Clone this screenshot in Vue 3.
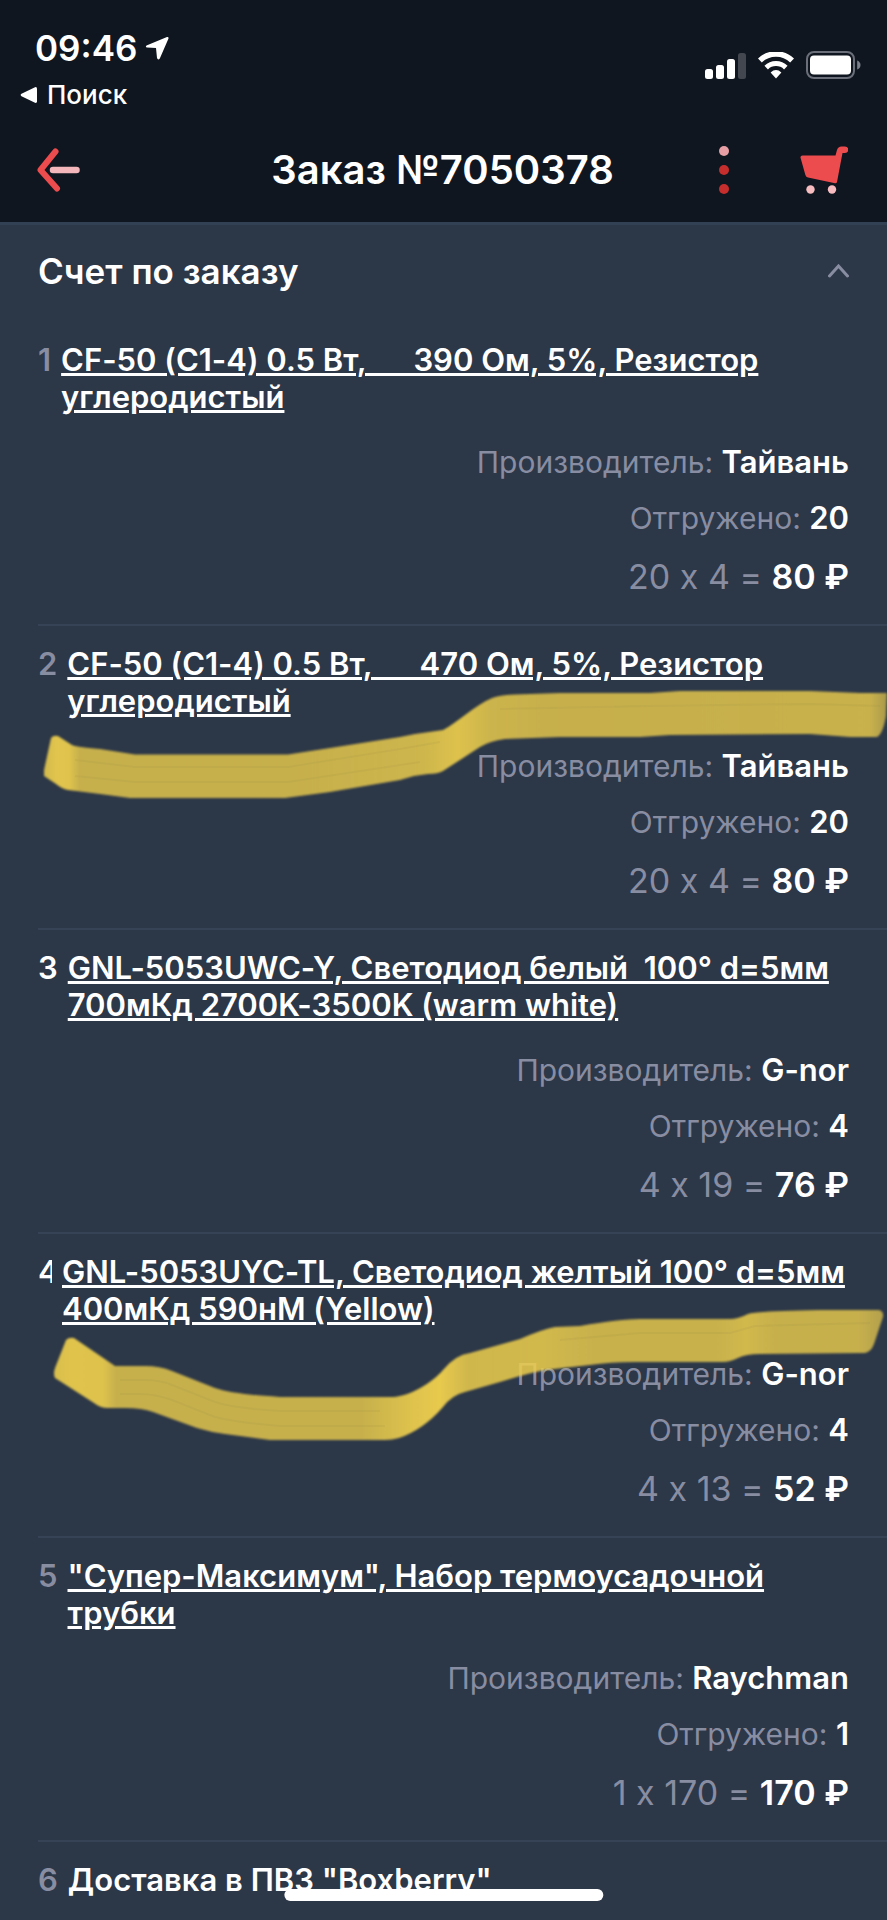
<script setup>
import { ref } from 'vue'

const expanded = ref(true)

const items = [
  { title: 'CF-50 (С1-4) 0.5 Вт,\u00a0\u00a0\u00a0\u00a0\u00a0\u00a0390 Ом, 5%, Резистор углеродистый', maker: 'Тайвань', shipped: 20, sum: '20 x 4 =', total: '80 ₽' },
  { title: 'CF-50 (С1-4) 0.5 Вт,\u00a0\u00a0\u00a0\u00a0\u00a0\u00a0470 Ом, 5%, Резистор углеродистый', maker: 'Тайвань', shipped: 20, sum: '20 x 4 =', total: '80 ₽', mark: 'first' },
  { title: 'GNL-5053UWC-Y, Светодиод белый\u00a0\u00a0100° d=5мм 700мКд 2700K-3500K (warm white)', maker: 'G-nor', shipped: 4, sum: '4 x 19 =', total: '76 ₽', bright: true },
  { title: 'GNL-5053UYC-TL, Светодиод желтый 100° d=5мм 400мКд 590нМ (Yellow)', maker: 'G-nor', shipped: 4, sum: '4 x 13 =', total: '52 ₽', bright: true, narrow: true, mark: 'second' },
  { title: '"Супер-Максимум", Набор термоусадочной трубки', maker: 'Raychman', shipped: 1, sum: '1 x 170 =', total: '170 ₽' },
]
</script>

<template>
  <div class="screen">
    <header class="top">
      <div class="status">
        <div class="status-left">
          <div class="clock">
            <span>09:46</span>
            <svg width="26" height="26" viewBox="0 0 26 26" aria-hidden="true">
              <path d="M23 2 L2.500 10.500 Q1 12 3 12.600 L12 13 L13 23 Q14 25.500 15.800 23.500 L24.500 3.500 Q25 1.500 23 2Z" fill="#fff" />
            </svg>
          </div>
          <a class="back-app" href="#search">
            <svg width="18" height="18" viewBox="0 0 18 18" aria-hidden="true">
              <path d="M1.500 7.800 L15 1.200 Q17 .6 17 2.800 V15.200 Q17 17.400 15 16.800 L1.500 10.200 Q-.2 9 1.500 7.800Z" fill="#fff" />
            </svg>
            <span>Поиск</span>
          </a>
        </div>
        <div class="status-right">
          <svg width="41" height="27" viewBox="0 0 41 27" aria-hidden="true">
            <rect x="0" y="17" width="8" height="10" rx="2.500" fill="#fff" />
            <rect x="11" y="13" width="8" height="14" rx="2.500" fill="#fff" />
            <rect x="22" y="7" width="8" height="20" rx="2.500" fill="#fff" />
            <rect x="33" y="1" width="8" height="26" rx="2.500" fill="#43474f" />
          </svg>
          <svg width="36" height="27" viewBox="0 0 36 27" aria-hidden="true">
            <path d="M1.900 9.300 A23.300 23.300 0 0 1 34.100 9.300" fill="none" stroke="#fff" stroke-width="5.600" transform="translate(0 -.8)" />
            <path d="M8.200 16 A14 14 0 0 1 27.800 16" fill="none" stroke="#fff" stroke-width="5" transform="translate(0 -.4)" />
            <path d="M12.600 20.400 Q18 15.600 23.400 20.400 L18 26.400Z" fill="#fff" />
          </svg>
          <svg width="55" height="28" viewBox="0 0 55 28" aria-hidden="true">
            <rect x="1" y="1" width="47" height="26" rx="7" fill="none" stroke="#6b6f7a" stroke-width="2" />
            <rect x="4" y="4.500" width="41" height="19" rx="4" fill="#fff" />
            <path d="M51.200 9.500 Q54.500 11 54.500 14 T51.200 18.500Z" fill="#7b7f89" />
          </svg>
        </div>
      </div>
      <nav class="nav">
        <button class="icon-button" type="button" aria-label="Назад">
          <svg width="44" height="44" viewBox="0 0 44 44">
            <path d="M16 22 H39.500" stroke="#f2b6bb" stroke-width="6.500" stroke-linecap="round" />
            <path d="M18.500 3.500 L3.500 22 L20 40.500" fill="none" stroke="#ec4c4e" stroke-width="6" stroke-linecap="round" stroke-linejoin="round" />
          </svg>
        </button>
        <h1>Заказ №7050378</h1>
        <div class="actions">
          <button class="icon-button" type="button" aria-label="Меню">
            <svg width="10" height="48" viewBox="0 0 10 48">
              <circle cx="5" cy="5" r="5" fill="#e79fa5" />
              <circle cx="5" cy="24" r="5" fill="#c62e2e" />
              <circle cx="5" cy="43" r="5" fill="#c62e2e" />
            </svg>
          </button>
          <button class="icon-button" type="button" aria-label="Корзина">
            <svg width="48" height="48" viewBox="0 0 48 48">
              <path d="M2.500 9.500 H35.500 L37 4 Q38 .5 41.500 .5 H45 A3 3 0 0 1 45 7 H42.500 L37 36 Q36.600 37.600 35 37.300 L8 31.500 Q6 31 5.400 29 L.6 12 Q0 9.500 2.500 9.500Z" fill="#ec4c4e" />
              <circle cx="10.500" cy="43.500" r="4.200" fill="#f6bcc0" />
              <circle cx="32" cy="43.500" r="4.200" fill="#f6bcc0" />
            </svg>
          </button>
        </div>
      </nav>
    </header>

    <main>
      <h2>
        <button class="section" type="button" :aria-expanded="expanded" @click="expanded = !expanded">
          <span>Счет по заказу</span>
          <svg width="21" height="14" viewBox="0 0 21 14" :class="{ closed: !expanded }" aria-hidden="true">
            <path d="M1.500 12 L10.500 2 L19.500 12" fill="none" stroke="#888da2" stroke-width="3" stroke-linecap="round" />
          </svg>
        </button>
      </h2>

      <ul v-if="expanded" class="items">
        <li v-for="(item, i) in items" :key="i" class="item">
          <div class="heading">
            <span class="number" :class="{ bright: item.bright, narrow: item.narrow }">{{ i + 1 }}</span>
            <a class="name" href="#item">{{ item.title }}</a>
          </div>
          <div class="details">
            <p>Производитель: <strong>{{ item.maker }}</strong></p>
            <p>Отгружено: <strong>{{ item.shipped }}</strong></p>
            <p class="sum">{{ item.sum }} <strong>{{ item.total }}</strong></p>
          </div>

          <svg v-if="item.mark === 'first'" class="marker" viewBox="0 626 887 304" preserveAspectRatio="none" aria-hidden="true">
            <defs>
              <linearGradient id="ink1" gradientUnits="userSpaceOnUse" x1="44" y1="0" x2="887" y2="0">
                <stop offset="0" stop-color="#edce4d" stop-opacity=".86" />
                <stop offset=".015" stop-color="#edce4d" stop-opacity=".94" />
                <stop offset=".03" stop-color="#edce4d" stop-opacity=".93" />
                <stop offset=".042" stop-color="#edce4d" stop-opacity=".8" />
                <stop offset=".3" stop-color="#edce4d" stop-opacity=".8" />
                <stop offset=".45" stop-color="#edce4d" stop-opacity=".84" />
                <stop offset=".49" stop-color="#edce4d" stop-opacity=".92" />
                <stop offset=".53" stop-color="#edce4d" stop-opacity=".83" />
                <stop offset=".6" stop-color="#edce4d" stop-opacity=".8" />
                <stop offset=".98" stop-color="#edce4d" stop-opacity=".81" />
                <stop offset="1" stop-color="#edce4d" stop-opacity=".65" />
              </linearGradient>
              <filter id="soft1"><feGaussianBlur stdDeviation="1" /></filter>
            </defs>
            <path filter="url(#soft1)" fill="url(#ink1)" d="M51 738 Q53 735 58 736 L72 745 Q76 747 100 749 L135 754.500 H288 L330 748 L400 737 L415 734 L443 730 C458 722 474 706 492 698 Q500 695 515 694.500 L560 693 H650 L680 691 H810 L860 693 H887 L886 716 Q883 734 877 737 H850 L810 734 L670 735 L640 737 H560 L505 739 Q490 741 480 747 L443 771 Q438 774 428 774 L414 776 L400 780 L330 792 L285 798 H130 L100 794 L68 790 Q62 789 56 784 L44 776 V770Z" />
            <g fill="none" stroke="#9d9045" stroke-width="2" opacity=".14">
              <path d="M75 760 L135 767 H288 L400 749 L440 742" />
              <path d="M75 776 L135 782 H288 L420 762" />
              <path d="M500 709 L650 706 L810 704 L880 706" />
            </g>
          </svg>

          <svg v-if="item.mark === 'second'" class="marker" viewBox="0 1234 887 304" preserveAspectRatio="none" aria-hidden="true">
            <defs>
              <linearGradient id="ink2" gradientUnits="userSpaceOnUse" x1="54" y1="0" x2="883" y2="0">
                <stop offset="0" stop-color="#edce4d" stop-opacity=".9" />
                <stop offset=".02" stop-color="#edce4d" stop-opacity=".93" />
                <stop offset=".06" stop-color="#edce4d" stop-opacity=".92" />
                <stop offset=".075" stop-color="#edce4d" stop-opacity=".8" />
                <stop offset=".37" stop-color="#edce4d" stop-opacity=".8" />
                <stop offset=".43" stop-color="#edce4d" stop-opacity=".92" />
                <stop offset=".465" stop-color="#edce4d" stop-opacity=".97" />
                <stop offset=".5" stop-color="#edce4d" stop-opacity=".85" />
                <stop offset=".59" stop-color="#edce4d" stop-opacity=".86" />
                <stop offset=".65" stop-color="#edce4d" stop-opacity=".81" />
                <stop offset=".8" stop-color="#edce4d" stop-opacity=".81" />
                <stop offset=".835" stop-color="#edce4d" stop-opacity=".86" />
                <stop offset=".87" stop-color="#edce4d" stop-opacity=".8" />
                <stop offset=".97" stop-color="#edce4d" stop-opacity=".8" />
                <stop offset="1" stop-color="#edce4d" stop-opacity=".7" />
              </linearGradient>
              <filter id="soft2"><feGaussianBlur stdDeviation="1" /></filter>
            </defs>
            <path filter="url(#soft2)" fill="url(#ink2)" d="M66 1340 Q69 1337 74 1338 L115 1366 H145 Q160 1366 172 1371 L215 1388 Q232 1394 280 1397 H393 C410 1396 432 1383 443 1370 Q455 1355 470 1353 L520 1339 Q543 1329 555 1327 L580 1326 Q620 1319 640 1319 H730 Q738 1319 748 1314 Q758 1311 820 1310 H879 Q884 1311 883 1317 L874 1344 Q871 1352 865 1353 L760 1354 Q746 1354 738 1358 Q730 1362 723 1362 H635 Q610 1362 590 1365 L545 1370 Q525 1374 500 1382 L465 1392 Q452 1395 443 1407 Q423 1430 399 1438 Q392 1440 385 1440 H270 L225 1434 Q210 1432 197 1428 L153 1412 Q142 1408 125 1408 H108 Q100 1408 94 1403 L55 1378 Q53 1374 55 1368Z" />
            <g fill="none" stroke="#9d9045" stroke-width="2" opacity=".14">
              <path d="M120 1380 H145 Q160 1380 172 1385 L215 1402 Q232 1408 280 1411 H380" />
              <path d="M120 1394 H140 Q155 1394 172 1400 L215 1417 Q240 1423 280 1426 H385" />
              <path d="M560 1340 L640 1333 H730 L755 1326 L870 1323" />
            </g>
          </svg>
        </li>
        <li class="item last">
          <div class="heading">
            <span class="number">6</span>
            <span class="name plain">Доставка в ПВЗ "Boxberry"</span>
          </div>
        </li>
      </ul>
    </main>
    <div class="home-bar"></div>
  </div>
</template>

<style>
body {
  margin: 0;
  background: #2c3748;
}
</style>

<style scoped>
.screen {
  min-height: 100vh;
  background: #2c3748;
  color: #fff;
  font-family: Inter, "Liberation Sans", sans-serif;
}
.top {
  background: #0f161f;
  border-bottom: 3px solid #334155;
}
.status {
  display: flex;
  justify-content: space-between;
  align-items: flex-start;
  padding: 26px 26px 0 20px;
}
.clock {
  display: flex;
  align-items: center;
  gap: 7px;
  padding-left: 15px;
  font-size: 35px;
  line-height: 44px;
  font-weight: 600;
}
.back-app {
  display: flex;
  align-items: center;
  gap: 9px;
  margin-top: 8px;
  color: #fff;
  font-size: 26px;
  line-height: 34px;
  font-weight: 500;
  text-decoration: none;
}
.status-right {
  display: flex;
  align-items: center;
  gap: 12px;
  padding-top: 25px;
}
.nav {
  display: grid;
  grid-template-columns: 1fr auto 1fr;
  align-items: center;
  height: 104px;
  padding: 6px 39px 0 37px;
}
.icon-button {
  display: flex;
  padding: 0;
  border: 0;
  background: none;
}
h1 {
  margin: 0;
  font-size: 40px;
  line-height: 46px;
  font-weight: 600;
}
.actions {
  display: flex;
  justify-content: flex-end;
  gap: 71px;
}
h2 {
  margin: 0;
}
.section {
  display: flex;
  justify-content: space-between;
  align-items: center;
  width: 100%;
  height: 97px;
  padding: 0 38px 5px;
  border: 0;
  background: none;
  color: #fff;
  font-family: inherit;
  font-size: 35px;
  font-weight: 600;
}
.closed {
  transform: rotate(180deg);
}
.items {
  margin: 0;
  padding: 0 0 0 38px;
  list-style: none;
  font-feature-settings: "calt" 0;
}
.item {
  position: relative;
  padding: 19px 38px 16px 0;
  border-bottom: 2px solid #364356;
}
.item.last {
  padding-bottom: 10px;
  border-bottom: 0;
}
.heading {
  display: flex;
  align-items: flex-start;
  gap: 10px;
  font-size: 31px;
  line-height: 37px;
  font-weight: 600;
}
.number {
  flex: none;
  color: #888da2;
}
.number.bright {
  color: #fff;
}
.number.narrow {
  width: 14px;
  overflow: hidden;
}
.name {
  color: #fff;
  text-decoration: underline;
  text-decoration-thickness: 3px;
}
.name.plain {
  text-decoration: none;
}
.details {
  margin-top: 19px;
  text-align: right;
  color: #888da2;
  font-size: 30px;
  line-height: 56px;
}
.details p {
  margin: 0;
  height: 56px;
}
.details strong {
  color: #fff;
  font-size: 31px;
  font-weight: 600;
}
.details .sum {
  height: 62px;
  font-size: 34px;
  line-height: 62px;
}
.details .sum strong {
  font-size: 34px;
}
.marker {
  position: absolute;
  top: 0;
  left: -38px;
  width: calc(100% + 38px);
  height: 304px;
  pointer-events: none;
}
.home-bar {
  position: fixed;
  bottom: 19px;
  left: 50%;
  width: 36%;
  height: 12px;
  border-radius: 6px;
  background: #fff;
  transform: translateX(-50%);
}
</style>
